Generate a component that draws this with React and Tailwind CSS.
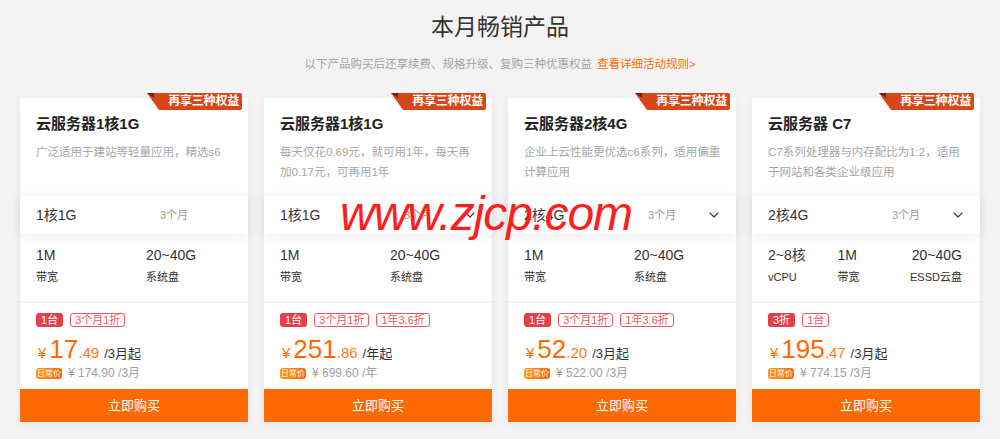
import React from "react";
import { ChevronDown } from "lucide-react";

const products = [
  {
    title: "云服务器1核1G",
    desc: "广泛适用于建站等轻量应用，精选s6",
    config: "1核1G",
    chevron: false,
    specs: [
      { value: "1M", label: "带宽" },
      { value: "20~40G", label: "系统盘" },
    ],
    tags: [
      { text: "1台", filled: true },
      { text: "3个月1折" },
    ],
    int: "17",
    dec: ".49",
    unit: "/3月起",
    daily: "¥ 174.90 /3月",
  },
  {
    title: "云服务器1核1G",
    desc: "每天仅花0.69元，就可用1年，每天再加0.17元，可再用1年",
    config: "1核1G",
    chevron: true,
    specs: [
      { value: "1M", label: "带宽" },
      { value: "20~40G", label: "系统盘" },
    ],
    tags: [
      { text: "1台", filled: true },
      { text: "3个月1折" },
      { text: "1年3.6折" },
    ],
    int: "251",
    dec: ".86",
    unit: "/年起",
    daily: "¥ 699.60 /年",
  },
  {
    title: "云服务器2核4G",
    desc: "企业上云性能更优选c6系列，适用偏重计算应用",
    config: "2核4G",
    chevron: true,
    specs: [
      { value: "1M", label: "带宽" },
      { value: "20~40G", label: "系统盘" },
    ],
    tags: [
      { text: "1台", filled: true },
      { text: "3个月1折" },
      { text: "1年3.6折" },
    ],
    int: "52",
    dec: ".20",
    unit: "/3月起",
    daily: "¥ 522.00 /3月",
  },
  {
    title: "云服务器 C7",
    desc: "C7系列处理器与内存配比为1:2，适用于网站和各类企业级应用",
    config: "2核4G",
    chevron: true,
    specs: [
      { value: "2~8核", label: "vCPU" },
      { value: "1M", label: "带宽" },
      { value: "20~40G", label: "ESSD云盘" },
    ],
    tags: [
      { text: "3折", filled: true },
      { text: "1台" },
    ],
    int: "195",
    dec: ".47",
    unit: "/3月起",
    daily: "¥ 774.15 /3月",
  },
];

// 角标
const Badge = () => (
  <div className="absolute top-[-5px] right-[6px] w-[95px] h-[17px]">
    <svg width="95" height="17" viewBox="0 0 95 17" className="absolute inset-0">
      <path d="M0 0 H93 Q95 0 95 2 V15 Q95 17 93 17 H12 Z" fill="#d9461a" />
      <path d="M0 0 L7 0 L7 5 Z" fill="#6b2210" />
    </svg>
    <span className="absolute right-[3px] top-0 leading-[17px] text-[12px] font-bold text-white tracking-[-0.2px]">
      再享三种权益
    </span>
  </div>
);

const Card = ({ p }) => {
  const three = p.specs.length === 3;
  return (
    <div className="relative bg-white flex flex-col h-[324px] shadow-[0_2px_10px_rgba(0,0,0,0.05)]">
      <Badge />
      <div className="h-[98px] px-4 pt-[14px]">
        <h3 className="text-[15px] leading-6 font-bold text-[#222]">{p.title}</h3>
        <p className="mt-[6px] w-[198px] text-[11.5px] leading-5 text-[#a6a6a6]">{p.desc}</p>
      </div>
      <div className="relative h-[38px] flex items-center px-4 bg-white shadow-[0_2px_12px_rgba(0,0,0,0.08)]">
        <span className="w-[124px] text-[14px] text-[#333]">{p.config}</span>
        <span className="text-[11px] text-[#999]">3个月</span>
        {p.chevron && (
          <ChevronDown size={16} strokeWidth={1.6} className="ml-auto mr-[-2px] text-[#333]" />
        )}
      </div>
      <div className="h-[67px] flex px-4 pt-[11px]">
        {p.specs.map((s, i) => (
          <div
            key={i}
            className={
              three
                ? i === 0
                  ? "w-[73px] whitespace-nowrap"
                  : i === 1
                  ? "w-[76px] whitespace-nowrap"
                  : "ml-auto text-right pr-[2px] whitespace-nowrap"
                : i === 0
                ? "w-[110px] whitespace-nowrap"
                : "whitespace-nowrap"
            }
          >
            <div className="text-[14px] leading-5 text-[#333]">{s.value}</div>
            <div className="mt-1 text-[11px] leading-4 text-[#333]">{s.label}</div>
          </div>
        ))}
      </div>
      <div className="h-[2px] bg-[#f5f5f5]" />
      <div className="px-4 pt-[10px]">
        <div className="flex gap-[7px]">
          {p.tags.map((t, i) => (
            <span
              key={i}
              className={
                t.filled
                  ? "h-[14px] px-[5px] rounded-[3px] bg-[#e5404a] text-white text-[11px] leading-[14px]"
                  : "h-[14px] px-[4px] rounded-[3px] border border-[#ec5a60] text-[#ec5a60] text-[11px] leading-[12px]"
              }
            >
              {t.text}
            </span>
          ))}
        </div>
        <div className="mt-[8px] h-[28px] flex items-baseline text-[#ff6a00]">
          <span className="text-[15px] mr-[3px] ml-[2px]">¥</span>
          <span className="text-[26px] leading-[28px]">{p.int}</span>
          <span className="text-[15px] text-[#ff7a1f]">{p.dec}</span>
          <span className="ml-[5px] text-[13px] text-[#333]">{p.unit}</span>
        </div>
        <div className="mt-[4px] flex items-center h-[12px]">
          <span className="h-[11px] w-[26px] rounded-[3px] bg-gradient-to-r from-[#ff9a0d] to-[#ff6a00] text-white text-[8px] leading-[11px] text-center">
            日常价
          </span>
          <span className="ml-[6px] text-[12px] text-[#a0a0a0]">{p.daily}</span>
        </div>
      </div>
      <button className="mt-auto h-[33px] bg-[#ff6a00] text-white text-[13px]">立即购买</button>
    </div>
  );
};

export default function App() {
  return (
    <div className="relative min-h-[439px] bg-[#f3f3f3] font-['Liberation_Sans','Noto_Sans_CJK_SC',sans-serif] overflow-hidden">
      <div className="pt-[11px] text-center">
        <h2 className="text-[23px] leading-8 text-[#333]">本月畅销产品</h2>
        <p className="mt-[13px] text-[11.5px] leading-4 text-[#a3a3a3]">
          以下产品购买后还享续费、规格升级、复购三种优惠权益
          <a className="ml-[5px] text-[#ff6a00]">查看详细活动规则&gt;</a>
        </p>
      </div>
      <div className="w-[960px] mx-auto mt-[26px] grid grid-cols-4 gap-4">
        {products.map((p, i) => (
          <Card key={i} p={p} />
        ))}
      </div>
      {/* 水印 */}
      <div className="absolute left-[340px] top-[186px] text-[48px] leading-[56px] italic text-[#ff1e1e] tracking-[-1px] pointer-events-none font-['Liberation_Sans',sans-serif]">
        www.zjcp.com
      </div>
    </div>
  );
}
